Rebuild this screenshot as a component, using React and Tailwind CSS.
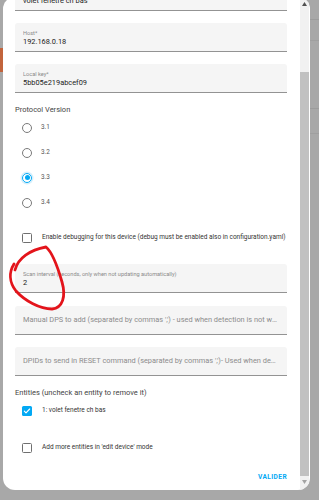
import React from "react";

const font = { fontFamily: "Roboto, 'Noto Sans', sans-serif" };

const Field = ({ label, value, placeholder }) => (
  <div
    className={
      "h-[29px] shrink-0 bg-[#f5f5f5] rounded-t-[3px] border-b border-[#939393] px-[8px] flex flex-col " +
      (placeholder ? "justify-center" : "pt-[6px]")
    }
  >
    {placeholder ? (
      <div className="text-[7.4px] leading-[10px] text-[#8c8c8c] truncate">{placeholder}</div>
    ) : (
      <>
        <div className="text-[5.6px] leading-[8px] text-[#8a8a8a] truncate">{label}</div>
        <div className="text-[7.4px] leading-[10px] text-[#222]">{value}</div>
      </>
    )}
  </div>
);

const Radio = ({ label, checked }) => (
  <div className="h-[25px] flex items-center pl-[7px]">
    {checked ? (
      <div className="w-[10px] h-[10px] rounded-full border border-[#03a9f4] flex items-center justify-center shadow-[0_0_0_1.5px_#d6effc]">
        <div className="w-[5px] h-[5px] rounded-full bg-[#03a9f4]" />
      </div>
    ) : (
      <div className="w-[10px] h-[10px] rounded-full border border-[#7a7a7a]" />
    )}
    <span className="ml-[9px] text-[6.4px] text-[#555]">{label}</span>
  </div>
);

const Checkbox = ({ label, checked }) => (
  <div className="h-full flex items-center pl-[7px]">
    {checked ? (
      <div className="w-[10px] h-[10px] rounded-[1.5px] bg-[#03a9f4] flex items-center justify-center">
        <svg width="8" height="8" viewBox="0 0 24 24">
          <path d="M4 12.5l5 5L20 6" fill="none" stroke="#fff" strokeWidth="3.4" strokeLinecap="round" strokeLinejoin="round" />
        </svg>
      </div>
    ) : (
      <div className="w-[10px] h-[10px] rounded-[1.5px] border border-[#6f6f6f] bg-white" />
    )}
    <span className="ml-[10px] text-[6.5px] text-[#333] whitespace-nowrap">{label}</span>
  </div>
);

export default function App() {
  return (
    <div className="relative w-[319px] h-[500px] overflow-hidden bg-[#a8a8a8] flex" style={font}>
      {/* dimmed page behind, left edge */}
      <div className="w-[3px] shrink-0 flex flex-col">
        <div className="h-[48px]" />
        <div className="h-[24px] bg-[#c2643c]" />
      </div>

      {/* dialog */}
      <div className="w-[307px] h-[493px] -mt-[3px] shrink-0 bg-white rounded-[12px] overflow-hidden flex">
        <div className="flex-1 min-w-0 pl-[12px] pr-[13px] flex flex-col">
          <div className="-mt-[15px] flex flex-col">
            <Field label="Friendly Name*" value="volet fenetre ch bas" />
            <div className="h-[12px]" />
            <Field label="Host*" value="192.168.0.18" />
            <div className="h-[12px]" />
            <Field label="Local key*" value="5bb05e219abcef09" />
          </div>

          <div className="mt-[12px] h-[10px] leading-[10px] text-[7.5px] text-[#444]">Protocol Version</div>
          <div className="flex flex-col">
            <Radio label="3.1" />
            <Radio label="3.2" />
            <Radio label="3.3" checked />
            <Radio label="3.4" />
          </div>

          <div className="mt-[10px] h-[25px]">
            <Checkbox label="Enable debugging for this device (debug must be enabled also in configuration.yaml)" />
          </div>

          <div className="mt-[14px] flex flex-col">
            <Field label="Scan interval (seconds, only when not updating automatically)" value="2" />
            <div className="h-[13px]" />
            <Field placeholder="Manual DPS to add (separated by commas ',') - used when detection is not working (optional)" />
            <div className="h-[12px]" />
            <Field placeholder="DPIDs to send in RESET command (separated by commas ',')- Used when device does not respond" />
          </div>

          <div className="mt-[12px] h-[10px] leading-[10px] text-[7.5px] text-[#444]">
            Entities (uncheck an entity to remove it)
          </div>
          <div className="mt-[3px] h-[20px]">
            <Checkbox label="1: volet fenetre ch bas" checked />
          </div>
          <div className="mt-[17px] h-[20px]">
            <Checkbox label="Add more entities in 'edit device' mode" />
          </div>

          <div className="mt-[14px] h-[12px] flex items-center justify-end">
            <span className="text-[6.6px] font-bold tracking-[0.06em] text-[#03a9f4]">VALIDER</span>
          </div>
        </div>

        {/* scrollbar */}
        <div className="w-[9px] mr-[1px] shrink-0 flex flex-col">
          <div className="h-[75px] bg-[#f1f1f1] flex justify-center pt-[5px]">
            <svg width="5" height="4" viewBox="0 0 5 4">
              <path d="M2.5 0L5 4H0z" fill="#505050" />
            </svg>
          </div>
          <div className="flex-1 bg-[#c1c1c1]" />
          <div className="h-[14px] bg-[#f1f1f1] flex justify-center pt-[4px]">
            <svg width="5" height="4" viewBox="0 0 5 4">
              <path d="M0 0H5L2.5 4z" fill="#a3a3a3" />
            </svg>
          </div>
        </div>
      </div>

      {/* dimmed page behind, right edge */}
      <div className="flex-1 flex flex-col">
        <div className="h-[19px]" />
        <div className="h-[21px] border-t border-[#9c9c9c]" />
        <div className="h-[68px] border-t border-[#9f9f9f]" />
        <div className="h-[25px] border-t border-[#9c9c9c]" />
        <div className="border-t border-[#9f9f9f]" />
      </div>

      {/* red hand-drawn annotation */}
      <svg className="absolute left-0 top-0 pointer-events-none" width="319" height="500">
        <path
          d="M15 270 C18 258 30 250 46 247 C52 252 58 268 62 282 C66 296 63 308 52 309 C40 309 25 301 16 291 C9 282 9 272 14 264"
          fill="none"
          stroke="#e3141b"
          strokeWidth="2.8"
          strokeLinecap="round"
          strokeLinejoin="round"
        />
      </svg>
    </div>
  );
}
